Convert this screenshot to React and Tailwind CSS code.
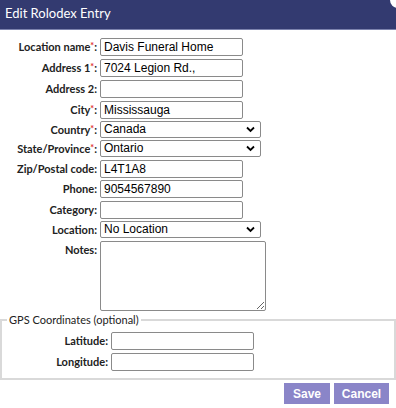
import React from "react";

const Req = () => <span className="text-[#e0302f] text-[9px] align-top relative top-[-1px]">*</span>;

function Row({ label, req, h, children }) {
  return (
    <div className="flex items-start" style={{ height: h }}>
      <div className="w-[98px] text-right pr-[1px] text-[11px] font-bold text-[#222] leading-[18px] whitespace-nowrap">
        {label}
        {req && <Req />}:
      </div>
      <div className="ml-[2px]">{children}</div>
    </div>
  );
}

const inputCls =
  "block w-[143px] h-[18px] border border-[#8a8a8a] rounded-[2px] px-[3px] text-[12px] text-black bg-white outline-none";
const fontInput = { fontFamily: '"Liberation Sans", Arial, sans-serif' };

function Input({ value = "" }) {
  return <input className={inputCls} style={fontInput} defaultValue={value} />;
}

function Select({ value }) {
  return (
    <div
      className="relative w-[161px] h-[17px] border border-[#8a8a8a] rounded-[2px] bg-white text-[12px] text-black leading-[15px] pl-[3px]"
      style={fontInput}
    >
      {value}
      <svg className="absolute right-[5px] top-[4px]" width="9" height="7" viewBox="0 0 9 7">
        <path d="M1 1.5 L4.5 5 L8 1.5" fill="none" stroke="#000" strokeWidth="1.8" />
      </svg>
    </div>
  );
}

export default function App() {
  return (
    <div className="w-[396px] h-[408px] bg-white relative overflow-hidden" style={{ fontFamily: "Lato, 'Noto Sans', sans-serif" }}>
      <div className="h-[30px] bg-[#333a70] border-b border-[#7c82ad] flex items-center pl-[5px]">
        <span className="text-white text-[13px] leading-none mt-[-3px]">Edit Rolodex Entry</span>
      </div>
      <div className="absolute right-[-10px] top-[-8px] w-[16px] h-[16px] rounded-full bg-white"></div>

      <div className="pt-[8px]">
        <Row label="Location name" req h={21}><Input value="Davis Funeral Home" /></Row>
        <Row label="Address 1" req h={21}><Input value="7024 Legion Rd.," /></Row>
        <Row label="Address 2" h={21}><Input /></Row>
        <Row label="City" req h={20}><Input value="Mississauga" /></Row>
        <Row label="Country" req h={19}><Select value="Canada" /></Row>
        <Row label="State/Province" req h={20}><Select value="Ontario" /></Row>
        <Row label="Zip/Postal code" h={20}><Input value="L4T1A8" /></Row>
        <Row label="Phone" h={21}><Input value="9054567890" /></Row>
        <Row label="Category" h={20}><Input /></Row>
        <Row label="Location" h={20}><Select value="No Location" /></Row>
        <Row label="Notes" h={72}>
          <textarea className="block w-[166px] h-[70px] border border-[#8a8a8a] rounded-[2px] bg-white outline-none resize" style={fontInput} />
        </Row>
      </div>

      <fieldset className="mt-[0px] w-[396px] border-2 border-[#d9d9d9] h-[67px] pl-[0px]">
        <legend className="ml-[5px] px-[2px] text-[11px] text-[#222] leading-[14px]">GPS Coordinates (optional)</legend>
        <div className="pt-[5px]">
          <div className="flex items-start h-[21px]">
            <div className="w-[106px] text-right text-[11px] font-bold text-[#222] leading-[18px]">Latitude:</div>
            <div className="ml-[3px]"><input className={inputCls} style={fontInput} /></div>
          </div>
          <div className="flex items-start h-[21px]">
            <div className="w-[106px] text-right text-[11px] font-bold text-[#222] leading-[18px]">Longitude:</div>
            <div className="ml-[3px]"><input className={inputCls} style={fontInput} /></div>
          </div>
        </div>
      </fieldset>

      <div className="flex justify-end gap-[4px] pr-[7px] pt-[3px]">
        <button className="w-[46px] h-[21px] bg-[#8a85c8] text-white text-[12px] font-bold" style={fontInput}>Save</button>
        <button className="w-[55px] h-[21px] bg-[#8a85c8] text-white text-[12px] font-bold" style={fontInput}>Cancel</button>
      </div>
    </div>
  );
}
